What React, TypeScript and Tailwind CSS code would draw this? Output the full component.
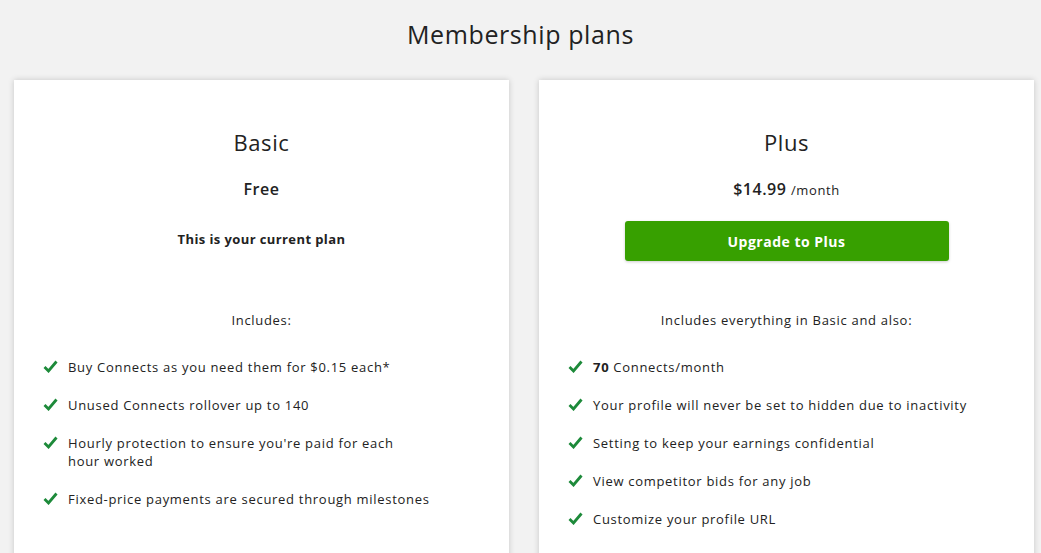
import React from "react";

const Check = () => (
  <svg width="15" height="13" viewBox="0 0 15 13" className="shrink-0 mt-[2px]">
    <path d="M1.5 7 L5.5 11 L13.5 1.5" fill="none" stroke="#1d8a3a" strokeWidth="2.8" strokeLinecap="butt" strokeLinejoin="miter" />
  </svg>
);

const Item = ({ children }: { children: React.ReactNode }) => (
  <li className="flex items-start">
    <Check />
    <span className="ml-[10px] leading-[18px]">{children}</span>
  </li>
);

export default function App() {
  return (
    <div
      className="w-[1041px] h-[553px] overflow-hidden bg-[#f2f2f2] text-[#222222]"
      style={{ fontFamily: '"Open Sans", "Liberation Sans", sans-serif' }}
    >
      <h1 className="text-center text-[25px] leading-[30px] tracking-[0.6px] pt-[19px] text-[#222222] font-normal">Membership plans</h1>
      <div className="flex gap-[30px] pl-[14px] mt-[31px]">
        <div className="w-[495px] h-[500px] bg-white shadow-[0_0_6px_rgba(0,0,0,0.18)] flex flex-col items-center">
          <div className="mt-[48px] text-[22px] leading-[28px] tracking-[0.6px]">Basic</div>
          <div className="mt-[22px] text-[16px] leading-[22px] font-semibold tracking-[0.5px]">Free</div>
          <div className="mt-[30px] text-[13px] leading-[18px] font-bold tracking-[0.4px]">This is your current plan</div>
          <div className="mt-[63px] text-[13px] leading-[18px] tracking-[0.7px]">Includes:</div>
          <ul className="self-stretch pl-[29px] pr-[40px] mt-[29px] text-[13px] tracking-[0.7px] flex flex-col gap-[20px]">
            <Item>Buy Connects as you need them for $0.15 each*</Item>
            <Item>Unused Connects rollover up to 140</Item>
            <Item>Hourly protection to ensure you're paid for each<br />hour worked</Item>
            <Item>Fixed-price payments are secured through milestones</Item>
          </ul>
        </div>
        <div className="w-[495px] h-[500px] bg-white shadow-[0_0_6px_rgba(0,0,0,0.18)] flex flex-col items-center">
          <div className="mt-[48px] text-[22px] leading-[28px] tracking-[0.6px]">Plus</div>
          <div className="mt-[22px] text-[16px] leading-[22px] tracking-[0.5px]">
            <span className="font-semibold">$14.99</span> <span className="text-[13px] tracking-[0.6px]">/month</span>
          </div>
          <button className="mt-[20px] w-[324px] h-[40px] rounded-[3px] bg-[#37a000] text-white text-[14px] font-bold tracking-[0.5px] shadow-[0_1px_3px_rgba(0,0,0,0.2)]">
            Upgrade to Plus
          </button>
          <div className="mt-[50px] text-[13px] leading-[18px] tracking-[0.7px]">Includes everything in Basic and also:</div>
          <ul className="self-stretch pl-[29px] pr-[20px] mt-[29px] text-[13px] tracking-[0.7px] flex flex-col gap-[20px]">
            <Item><b>70</b> Connects/month</Item>
            <Item>Your profile will never be set to hidden due to inactivity</Item>
            <Item>Setting to keep your earnings confidential</Item>
            <Item>View competitor bids for any job</Item>
            <Item>Customize your profile URL</Item>
          </ul>
        </div>
      </div>
    </div>
  );
}
